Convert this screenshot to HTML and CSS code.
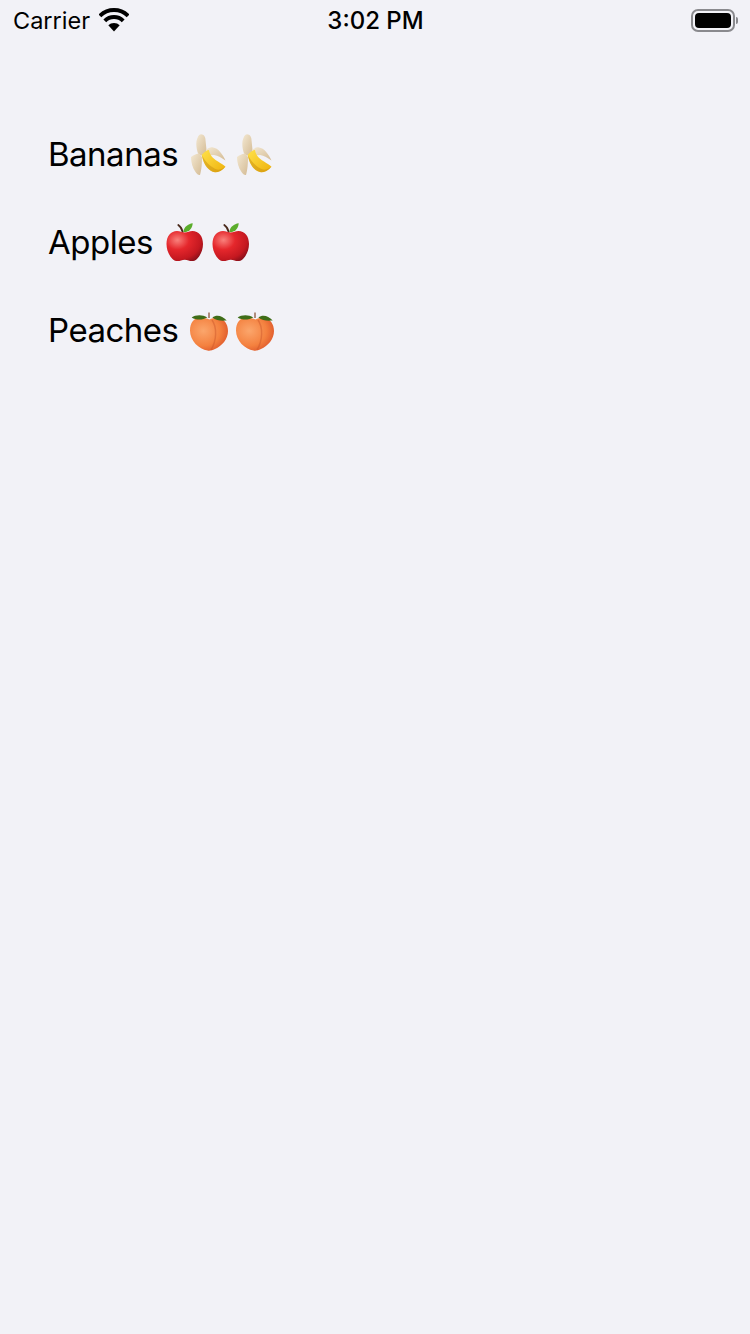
FILE: index.html
```html
<!DOCTYPE html>
<html lang="en">
<head>
<meta charset="utf-8">
<title>Fruit list</title>
<link rel="stylesheet" href="styles.css">
</head>
<body>
<svg class="defs" width="0" height="0" aria-hidden="true">
  <defs>
    <linearGradient id="peel" x1="0" y1="0" x2="1" y2="1"><stop offset="0" stop-color="#f3e8d2"/><stop offset="1" stop-color="#d4bb94"/></linearGradient>
    <linearGradient id="fruit" x1="0" y1="0" x2="1" y2="1"><stop offset="0" stop-color="#ffe14a"/><stop offset="1" stop-color="#eeb10c"/></linearGradient>
    <radialGradient id="red" cx=".3" cy=".3" r=".8"><stop offset="0" stop-color="#f9817c"/><stop offset=".4" stop-color="#e5272c"/><stop offset=".8" stop-color="#c41820"/><stop offset="1" stop-color="#8e101a"/></radialGradient>
    <radialGradient id="orange" cx=".35" cy=".4" r=".75"><stop offset="0" stop-color="#fba66c"/><stop offset=".6" stop-color="#f4813f"/><stop offset="1" stop-color="#d94f27"/></radialGradient>
    <symbol id="banana" viewBox="0 0 40 40" overflow="visible">
      <path fill="url(#peel)" d="M7.500 7C8.500 3 10 .3 12 .3 15 .5 16.500 3 16.500 6L17.500 16C17.500 19 15 21.500 13 21.500 11 21.500 9 20 8.500 18 7.500 14 7 11 7.500 7Z"/>
      <path fill="url(#peel)" d="M2 23C5 21 8 19.500 10 19.500L13 23C13 30 12.500 36 11 41 9.500 41.500 8 40 6.500 38 3.500 34 2 28 2 23Z"/>
      <path fill="url(#peel)" d="M17 16C19 14 22 13 24 13.500 29 14 33.500 20 36.500 26.500 33 24 29 21.500 25 21L18 21.500Z"/>
      <path fill="url(#fruit)" d="M12.700 21C15 18 18 16 20 16 20.500 20 23 24 29 27.500 32 29.500 35 31 36.500 32.700 33 36.500 29.500 38.300 26 38.200 20 37.500 14.500 31 12.700 21Z"/>
      <path fill="#c98f10" opacity=".5" d="M13 21.500C16 27 21 33 28 35.500 30 36 33 35 36.500 32.700 33 36.500 29.500 38.300 26 38.200 20 37.500 14.500 31 13 21.500Z"/>
    </symbol>
    <symbol id="apple" viewBox="0 -1 40 40" overflow="visible">
      <path fill="none" stroke="#4a2a1c" stroke-width="1.800" stroke-linecap="round" d="M13.300 2C15.500 3.500 17 6 17.700 9"/>
      <path fill="#5bad2c" d="M18.300 8.700C19 4 23 1 27.700.3 27.500 4.500 25 8.500 20 9.300Z"/>
      <path fill="url(#red)" d="M12 8C15 8 17 9.500 19.700 9.500 22.500 9.500 24.500 8 27.500 8 33.500 8 38 13 38 21 38 27 35.500 32.500 32 36 29.500 38.500 26 38.500 23.500 37.500 21 36.500 18.500 36.500 16 37.500 13.500 38.500 10 38.500 7.500 36 4 32.500 1.500 27 1.500 21 1.500 13 6 8 12 8Z"/>
    </symbol>
    <symbol id="peach" viewBox="1 -2 40 40" overflow="visible">
      <path fill="url(#orange)" d="M11 5.500C15 5.500 18 6.500 20.500 7.500 23 6.500 26 5.500 29 6 35 6.500 39 12 39 19 39 27 33 34 26 37 23 38.500 20.500 39 18.500 38.500 10 37 1 29 1 18.500 1 11 5 5.500 11 5.500Z"/>
      <path fill="none" stroke="#c9552a" stroke-width="1.400" opacity=".45" d="M23 8C28 15 28 28 22 38"/>
      <path fill="none" stroke="#9a6a55" stroke-width="1.500" d="M20 .5V6"/>
      <path fill="#3f6d18" d="M2.700 5.500C6 3 13 2 18.300 5.500 14 8 7 8.500 2.700 5.500Z"/>
      <path fill="#3f6d18" d="M23.400 5.500C27 2.500 33 3 37.700 8.500 32 9 27 8.500 23.400 5.500Z"/>
    </symbol>
  </defs>
</svg>

<header class="status-bar">
  <div class="status-left">
    <span class="carrier">Carrier</span>
    <svg class="wifi" viewBox="0 0 30 24" width="30" height="24" aria-hidden="true">
      <path fill="none" stroke="#000" stroke-width="4" d="M.9 7.900A20 20 0 0 1 29.100 7.900"/>
      <path fill="none" stroke="#000" stroke-width="4" d="M5.800 12.800A13 13 0 0 1 24.200 12.800"/>
      <path fill="#000" d="M15 23.500 9.300 17.300A8 8 0 0 1 20.700 17.300Z"/>
    </svg>
  </div>
  <div class="time">3:02 PM</div>
  <div class="status-right">
    <div class="battery"><div class="battery-fill"></div></div>
    <div class="battery-nub"></div>
  </div>
</header>

<main class="fruit-list">
  <div class="fruit-row">
    <span class="fruit-name">Bananas</span>
    <svg class="emoji"><use href="#banana"/></svg>
    <svg class="emoji"><use href="#banana"/></svg>
  </div>
  <div class="fruit-row">
    <span class="fruit-name fruit-name-apples">Apples</span>
    <svg class="emoji"><use href="#apple"/></svg>
    <svg class="emoji"><use href="#apple"/></svg>
  </div>
  <div class="fruit-row">
    <span class="fruit-name">Peaches</span>
    <svg class="emoji"><use href="#peach"/></svg>
    <svg class="emoji"><use href="#peach"/></svg>
  </div>
</main>
</body>
</html>
```
FILE: styles.css
```css
html, body {
  margin: 0;
  padding: 0;
}

body {
  width: 750px;
  height: 1334px;
  overflow: hidden;
  background: #f2f2f7;
  color: #000;
  font-family: Inter, "Liberation Sans", sans-serif;
}

.defs {
  display: block;
  width: 0;
  height: 0;
}

.status-bar {
  display: grid;
  grid-template-columns: 1fr auto 1fr;
  align-items: center;
  height: 40px;
  padding: 0 12px 0 13px;
  font-size: 23.5px;
}

.status-left {
  display: flex;
  align-items: center;
  gap: 9px;
}

.wifi {
  display: block;
}

.time {
  font-weight: 550;
  font-size: 24px;
}

.status-right {
  display: flex;
  align-items: center;
  justify-content: flex-end;
  gap: 1px;
}

.battery {
  box-sizing: border-box;
  width: 44px;
  height: 23px;
  padding: 2px;
  border: 2px solid #8a8a8e;
  border-radius: 7px;
}

.battery-fill {
  height: 100%;
  background: #000;
  border-radius: 4px;
}

.battery-nub {
  width: 2px;
  height: 7px;
  background: #8a8a8e;
  border-radius: 0 2px 2px 0;
}

.fruit-list {
  display: flex;
  flex-direction: column;
  padding: 70px 0 0 48px;
}

.fruit-row {
  display: flex;
  align-items: center;
  gap: 6px;
  height: 88px;
  font-size: 33px;
  letter-spacing: -0.5px;
}

.fruit-name {
  margin-right: 5px;
}

.fruit-name-apples {
  margin-right: 6.500px;
}

.emoji {
  width: 40px;
  height: 40px;
  flex: none;
  overflow: visible;
}
```
